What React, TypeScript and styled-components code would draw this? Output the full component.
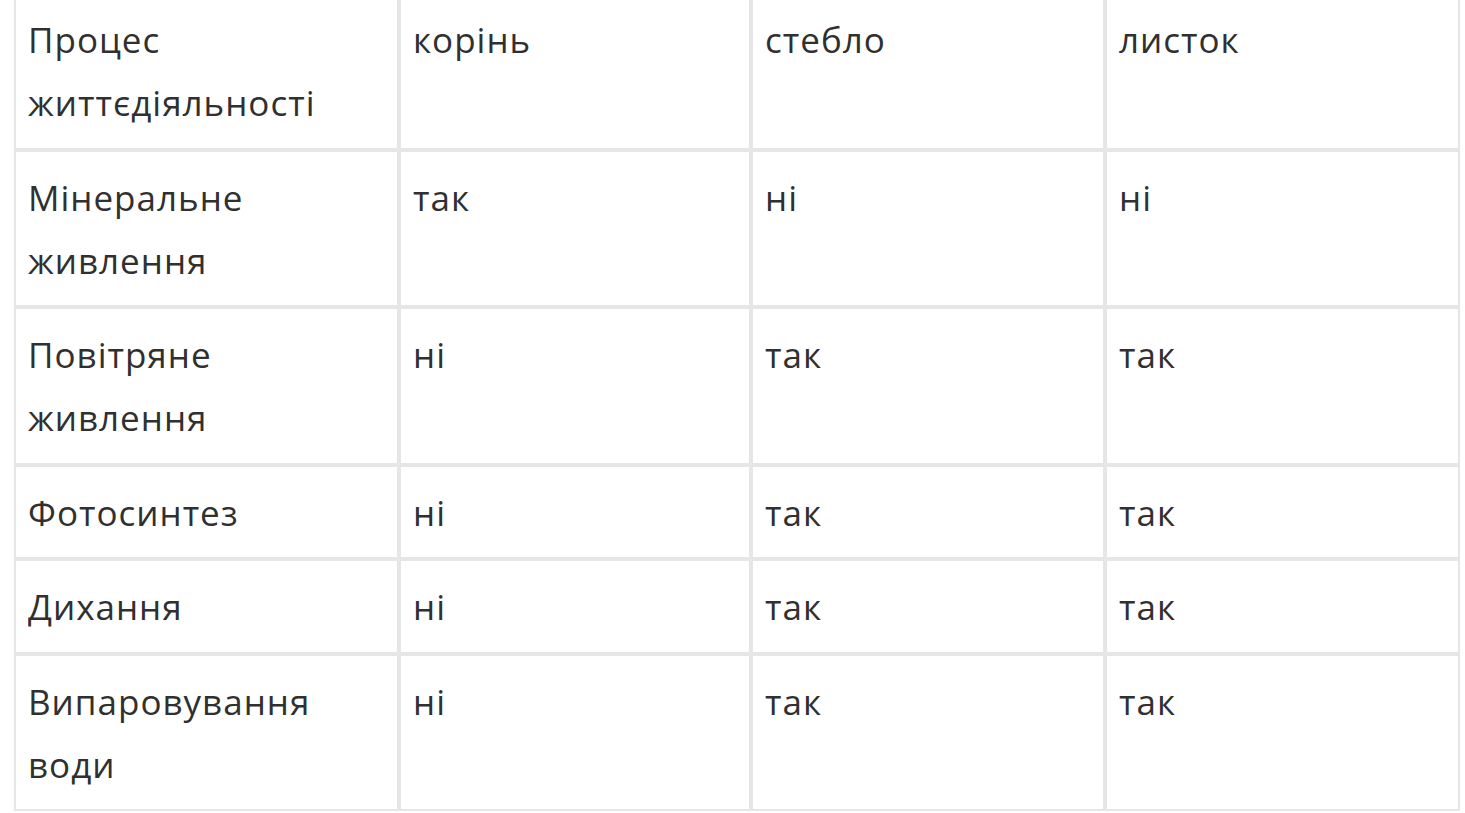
import React from 'react'
import styled, { createGlobalStyle } from 'styled-components'

const GlobalStyle = createGlobalStyle`
  html, body {
    margin: 0;
    padding: 0;
    background: #fff;
  }
  body {
    font-family: "Open Sans", "Noto Sans", sans-serif;
    color: #333;
    overflow: hidden;
  }
`

const Wrap = styled.div`
  padding: 0 5px 0 14px;
  margin-top: -8px;
`

const Table = styled.table`
  width: 1446px;
  table-layout: fixed;
  border-collapse: separate;
  border-spacing: 0;
`

const Cell = styled.td`
  box-sizing: border-box;
  border: 2px solid #e6e6e6;
  padding: 14px 10px 13.5px 12px;
  font-size: 35px;
  line-height: 63px;
  letter-spacing: 1px;
  font-weight: 400;
  text-align: left;
  vertical-align: top;
  color: #303030;
`

const colWidths = [385, 352, 354, 355]

const rows: string[][] = [
  ['Процес життєдіяльності', 'корінь', 'стебло', 'листок'],
  ['Мінеральне живлення', 'так', 'ні', 'ні'],
  ['Повітряне живлення', 'ні', 'так', 'так'],
  ['Фотосинтез', 'ні', 'так', 'так'],
  ['Дихання', 'ні', 'так', 'так'],
  ['Випаровування води', 'ні', 'так', 'так'],
]

export default function App() {
  return (
    <>
      <GlobalStyle />
      <Wrap>
        <Table>
          <colgroup>
            {colWidths.map((w, i) => (
              <col key={i} style={{ width: w }} />
            ))}
          </colgroup>
          <tbody>
            {rows.map((row, r) => (
              <tr key={r}>
                {row.map((txt, c) => (
                  <Cell key={c}>{txt}</Cell>
                ))}
              </tr>
            ))}
          </tbody>
        </Table>
      </Wrap>
    </>
  )
}
